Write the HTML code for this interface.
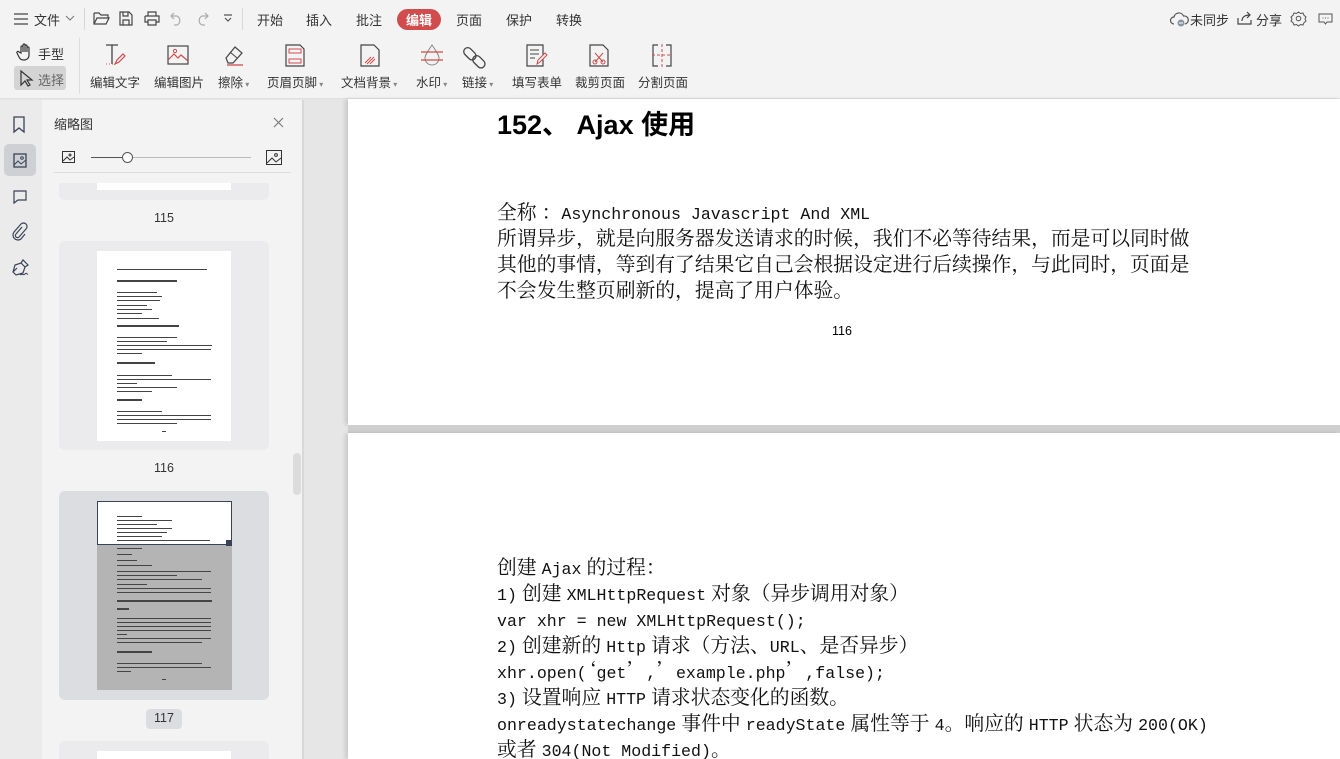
<!DOCTYPE html>
<html><head><meta charset="utf-8">
<style>
*{margin:0;padding:0;box-sizing:border-box}
html{width:1340px;height:759px;overflow:hidden}
body{width:1340px;height:759px;overflow:hidden;position:relative;background:#e6e6e6;font-family:"Liberation Sans","Noto Sans CJK SC",sans-serif;color:#333}
.abs{position:absolute}
#top{left:0;top:0;width:1340px;height:99px;background:#f3f3f3;border-bottom:1px solid #e0e0e0}
.t{position:absolute;font-size:13px;color:#333;white-space:nowrap}
.tab{position:absolute;top:10px;font-size:13px;color:#333}
.lbl{position:absolute;top:72px;font-size:12.5px;color:#333;white-space:nowrap}
svg{position:absolute;overflow:visible}
#strip{left:0;top:100px;width:42px;height:659px;background:#ebebeb}
#panel{left:42px;top:100px;width:249px;height:659px;background:#f3f3f3}
#sb{left:291px;top:100px;width:13px;height:659px;background:#f3f3f3;border-right:2px solid #d8d8da}
.page{position:absolute;left:348px;width:992px;background:#fff}
.ln{position:absolute;left:497px;height:26px;line-height:26px;font-family:"Noto Serif CJK SC","Liberation Serif",serif;font-size:19.8px;color:#111;white-space:nowrap}
.m{font-family:"Liberation Mono",monospace;font-style:normal;font-size:16.6px;line-height:1}
.card{position:absolute;left:59px;width:210px;border-radius:6px;overflow:hidden}
.tl{position:absolute;height:2px;background:#444}
.num{position:absolute;font-size:12.5px;color:#333;width:60px;text-align:center;left:134px}
</style></head><body>
<div id="top" class="abs">
 <svg style="left:13px;top:13px" width="16" height="12"><path d="M1 1h14M1 6h14M1 11h14" stroke="#444" stroke-width="1.3"/></svg>
 <div class="t" style="left:34px;top:10px">文件</div>
 <svg style="left:65px;top:15px" width="10" height="6"><path d="M1 1l4 4 4-4" stroke="#777" fill="none"/></svg>
 <div class="abs" style="left:84px;top:8px;width:1px;height:22px;background:#d8d8d8"></div>
 <svg style="left:93px;top:11px" width="17" height="14"><path d="M1 2h5l2 2h7v3M1 2v11h12l3-6H4l-3 6" stroke="#444" fill="none" stroke-width="1.2"/></svg>
 <svg style="left:119px;top:11px" width="14" height="15"><path d="M1 1h9l3 3v10H1zM4 1v4h5V1M4 14V9h6v5" stroke="#444" fill="none" stroke-width="1.2"/></svg>
 <svg style="left:144px;top:11px" width="16" height="15"><path d="M4 5V1h8v4M1 5h14v6h-3M4 11H1V5M4 9h8v5H4z" stroke="#444" fill="none" stroke-width="1.2"/></svg>
 <svg style="left:170px;top:12px" width="13" height="13"><path d="M4 1L1 4l3 3M1 4h6a5 5 0 010 9H4" stroke="#aaa" fill="none" stroke-width="1.2"/></svg>
 <svg style="left:196px;top:12px" width="13" height="13"><path d="M9 1l3 3-3 3M12 4H6a5 5 0 000 9h3" stroke="#aaa" fill="none" stroke-width="1.2"/></svg>
 <svg style="left:223px;top:14px" width="10" height="9"><path d="M1 1h8M2 4l3 3 3-3" stroke="#555" fill="none" stroke-width="1.2"/></svg>
 <div class="abs" style="left:242px;top:8px;width:1px;height:22px;background:#d8d8d8"></div>
 <div class="tab" style="left:257px">开始</div>
 <div class="tab" style="left:306px">插入</div>
 <div class="tab" style="left:356px">批注</div>
 <div class="abs" style="left:397px;top:9px;width:44px;height:21px;border-radius:11px;background:#d14c4c"></div>
 <div class="tab" style="left:406px;color:#fff;font-weight:bold">编辑</div>
 <div class="tab" style="left:456px">页面</div>
 <div class="tab" style="left:506px">保护</div>
 <div class="tab" style="left:556px">转换</div>
 <svg style="left:1170px;top:12px" width="18" height="15"><path d="M4 12a3.5 3.5 0 010-7 5 5 0 019.5-1A4 4 0 0115 12" stroke="#555" fill="none" stroke-width="1.2"/><circle cx="11" cy="11" r="3.5" fill="#8a93a6"/><path d="M9 11h4" stroke="#fff"/></svg>
 <div class="t" style="left:1190px;top:10px">未同步</div>
 <svg style="left:1237px;top:11px" width="15" height="15"><path d="M1 7v6h13V9M5 10c0-4 3-6 8-6M10 1l3 3-3 3" stroke="#444" fill="none" stroke-width="1.2"/></svg>
 <div class="t" style="left:1256px;top:10px">分享</div>
 <svg style="left:1291px;top:11px" width="15" height="15"><path d="M7.5 1l2 1.5 2.5-.5 1 2.3 2 1.7-1 2 1 2-2 1.7-1 2.3-2.5-.5-2 1.5-2-1.5-2.5.5-1-2.3-2-1.7 1-2-1-2 2-1.7 1-2.3 2.5.5z" stroke="#555" fill="none"/><circle cx="7.5" cy="7.5" r="2.3" stroke="#555" fill="none"/></svg>
 <svg style="left:1318px;top:13px" width="15" height="12"><path d="M1 1h13v8H9l-1.5 2L6 9H1z" stroke="#555" fill="none"/><path d="M4.5 5h1M7 5h1M9.5 5h1" stroke="#555"/></svg>
 <svg style="left:17px;top:43px" width="16" height="18"><path d="M4 10V4a1 1 0 012 0v5V2a1 1 0 012 0v7V3a1 1 0 012 0v6V5a1 1 0 012 0v7c0 3-2 5-5 5s-4-1-5-3l-2-4a1 1 0 012-1z" stroke="#333" fill="none" stroke-width="1.2"/></svg>
 <div class="t" style="left:38px;top:44px">手型</div>
 <div class="abs" style="left:14px;top:66px;width:52px;height:24px;border-radius:3px;background:#d4d4d4"></div>
 <svg style="left:20px;top:70px" width="13" height="17"><path d="M1 1v14l4-4 3 5 2-1-3-5h5z" stroke="#333" fill="none" stroke-width="1.2"/></svg>
 <div class="t" style="left:38px;top:70px;color:#666">选择</div>
 <div class="abs" style="left:79px;top:38px;width:1px;height:56px;background:#ddd"></div>
 <svg style="left:104px;top:44px" width="22" height="22"><path d="M2 1h12M8 1v19" stroke="#444" stroke-width="1.3"/><path d="M11 20l2-4 6-6 2 2-6 6z" stroke="#d14c4c" fill="none" stroke-width="1.2"/><path d="M2 20h7" stroke="#d14c4c" stroke-dasharray="1 2"/></svg>
 <div class="lbl" style="left:90px">编辑文字</div>
 <svg style="left:167px;top:45px" width="22" height="20"><rect x="1" y="1" width="20" height="18" stroke="#444" fill="none" stroke-width="1.2"/><path d="M1 15l6-6 4 4 3-3 7 6" stroke="#d14c4c" fill="none" stroke-width="1.2"/><circle cx="8" cy="6" r="1.6" stroke="#d14c4c" fill="none"/></svg>
 <div class="lbl" style="left:154px">编辑图片</div>
 <svg style="left:223px;top:44px" width="22" height="22"><path d="M3 14l9-11 7 6-9 10H5z" stroke="#444" fill="none" stroke-width="1.2"/><path d="M7 8l7 6" stroke="#444"/><path d="M4 21h16" stroke="#d14c4c" stroke-width="1.3"/></svg>
 <div class="lbl" style="left:218px">擦除<span style="font-size:8px;color:#888"> ▾</span></div>
 <svg style="left:285px;top:44px" width="20" height="23"><path d="M1 1h14l4 4v17H1z" stroke="#444" fill="none" stroke-width="1.2"/><rect x="4" y="5" width="12" height="4" stroke="#d14c4c" fill="none"/><rect x="4" y="15" width="12" height="4" stroke="#d14c4c" fill="none"/></svg>
 <div class="lbl" style="left:267px">页眉页脚<span style="font-size:8px;color:#888"> ▾</span></div>
 <svg style="left:360px;top:44px" width="20" height="23"><path d="M1 1h13l5 5v16H1z" stroke="#444" fill="none" stroke-width="1.2"/><path d="M5 19l6-6M7 20l7-7M10 20l5-5" stroke="#d14c4c"/></svg>
 <div class="lbl" style="left:341px">文档背景<span style="font-size:8px;color:#888"> ▾</span></div>
 <svg style="left:420px;top:43px" width="24" height="24"><path d="M12 2c-4 6-7 10-7 13a7 7 0 0014 0c0-3-3-7-7-13z" stroke="#888" fill="none"/><path d="M1 9h22M1 17h22" stroke="#d14c4c" stroke-width="1.2"/></svg>
 <div class="lbl" style="left:416px">水印<span style="font-size:8px;color:#888"> ▾</span></div>
 <svg style="left:467px;top:43px" width="24" height="24"><rect x="-3" y="3" width="14" height="8" rx="4" transform="translate(5 3) rotate(45)" stroke="#444" fill="none" stroke-width="1.3"/><rect x="-3" y="3" width="14" height="8" rx="4" transform="translate(14 11) rotate(45)" stroke="#444" fill="none" stroke-width="1.3"/></svg>
 <div class="lbl" style="left:462px">链接<span style="font-size:8px;color:#888"> ▾</span></div>
 <svg style="left:526px;top:44px" width="22" height="23"><path d="M1 1h16v21H1z" stroke="#444" fill="none" stroke-width="1.2"/><path d="M4 6h9M4 10h9M4 14h5" stroke="#444"/><path d="M11 20l1-4 7-7 2 2-7 7z" stroke="#d14c4c" fill="#f3f3f3"/></svg>
 <div class="lbl" style="left:512px">填写表单</div>
 <svg style="left:589px;top:44px" width="20" height="23"><path d="M1 1h13l5 5v16H1z" stroke="#444" fill="none" stroke-width="1.2"/><path d="M6 9l8 9M14 9l-8 9" stroke="#d14c4c"/><circle cx="6" cy="18" r="2" stroke="#d14c4c" fill="none"/><circle cx="14" cy="18" r="2" stroke="#d14c4c" fill="none"/></svg>
 <div class="lbl" style="left:575px">裁剪页面</div>
 <svg style="left:652px;top:44px" width="20" height="23"><path d="M6 1H1v21h5M14 1h5v21h-5" stroke="#444" fill="none" stroke-width="1.2"/><path d="M10 0v23M0 11h20" stroke="#d14c4c" stroke-dasharray="3 2"/></svg>
 <div class="lbl" style="left:638px">分割页面</div>
</div>

<div id="strip" class="abs">
 <svg style="left:13px;top:16px" width="12" height="17"><path d="M1 1h10v15l-5-4-5 4z" stroke="#3b4257" fill="none" stroke-width="1.3"/></svg>
 <div class="abs" style="left:4px;top:44px;width:32px;height:32px;border-radius:5px;background:#cfd0d3"></div>
 <svg style="left:13px;top:53px" width="14" height="15"><rect x="1" y="1" width="12" height="13" stroke="#3b4257" fill="none" stroke-width="1.3"/><path d="M1 12l4-4 3 3 5-4" stroke="#3b4257" fill="none"/><circle cx="9" cy="5" r="1.3" stroke="#3b4257" fill="none"/></svg>
 <svg style="left:13px;top:90px" width="14" height="13"><path d="M1 1h12v9H5l-4 3z" stroke="#3b4257" fill="none" stroke-width="1.2"/></svg>
 <svg style="left:12px;top:123px" width="15" height="18"><path d="M10 4l-6 7a2 2 0 003 3l7-8a3.5 3.5 0 00-5-5L2 9a5 5 0 007 7l4-5" stroke="#3b4257" fill="none" stroke-width="1.2"/></svg>
 <svg style="left:11px;top:159px" width="18" height="17"><path d="M2 13l2-7 6-2 4 4-2 6-7 2zM10 4l2-3 5 5-3 2M2 13l4-4" stroke="#3b4257" fill="none" stroke-width="1.2"/><path d="M9 16c2-2 3 1 5-1s2 1 3 0" stroke="#3b4257" fill="none"/></svg>
</div>

<div id="panel" class="abs">
 <div class="abs" style="left:12px;top:14px;font-size:13px;color:#333">缩略图</div>
 <svg style="left:231px;top:17px" width="11" height="11"><path d="M1 1l9 9M10 1l-9 9" stroke="#777" stroke-width="1.1"/></svg>
 <svg style="left:20px;top:51px" width="13" height="12"><rect x=".5" y=".5" width="12" height="11" stroke="#333" fill="none"/><path d="M1 10l4-4 3 3 4-3" stroke="#333" fill="none"/><circle cx="8" cy="4" r="1" stroke="#333" fill="none"/></svg>
 <div class="abs" style="left:49px;top:57px;width:160px;height:1px;background:#bbb"></div>
 <div class="abs" style="left:49px;top:57px;width:37px;height:1px;background:#555"></div>
 <div class="abs" style="left:80px;top:52px;width:11px;height:11px;border-radius:50%;border:1px solid #555;background:#fff"></div>
 <svg style="left:224px;top:50px" width="16" height="15"><rect x=".5" y=".5" width="15" height="14" stroke="#333" fill="none"/><path d="M1 13l5-5 4 4 5-4" stroke="#333" fill="none"/><circle cx="10" cy="5" r="1.4" stroke="#333" fill="none"/></svg>
 <div class="abs" style="left:12px;top:72px;width:237px;height:1px;background:#ddd"></div>
</div>
<div id="sb" class="abs"><div class="abs" style="left:2px;top:353px;width:8px;height:42px;border-radius:4px;background:#dcdcdc"></div></div>

<div class="card" style="top:183px;height:17px;background:#ebebed;border-radius:0 0 6px 6px"><div class="abs" style="left:38px;top:0;width:134px;height:7px;background:#fff"></div></div>
<div class="num" style="top:211px">115</div>
<div class="card" style="top:241px;height:209px;background:#ebebed">
 <div class="abs" style="left:38px;top:10px;width:134px;height:190px;background:#fff">
  <div class="tl" style="left:20px;top:18px;width:90px;height:1px"></div>
  <div class="tl" style="left:20px;top:29px;width:60px"></div>
  <div class="tl" style="left:20px;top:41px;width:40px;height:1px"></div><div class="tl" style="left:20px;top:45px;width:45px;height:1px"></div><div class="tl" style="left:20px;top:49px;width:43px;height:1px"></div><div class="tl" style="left:20px;top:54px;width:30px;height:1px"></div><div class="tl" style="left:20px;top:58px;width:35px;height:1px"></div><div class="tl" style="left:20px;top:62px;width:25px;height:1px"></div><div class="tl" style="left:20px;top:67px;width:42px;height:1px"></div>
  <div class="tl" style="left:20px;top:74px;width:62px"></div>
  <div class="tl" style="left:20px;top:86px;width:60px;height:1px"></div><div class="tl" style="left:20px;top:90px;width:50px;height:1px"></div><div class="tl" style="left:20px;top:94px;width:95px;height:1px"></div><div class="tl" style="left:20px;top:98px;width:94px;height:1px"></div><div class="tl" style="left:20px;top:102px;width:25px;height:1px"></div>
  <div class="tl" style="left:20px;top:111px;width:38px"></div>
  <div class="tl" style="left:20px;top:124px;width:55px;height:1px"></div><div class="tl" style="left:20px;top:128px;width:94px;height:1px"></div><div class="tl" style="left:20px;top:132px;width:20px;height:1px"></div><div class="tl" style="left:20px;top:136px;width:60px;height:1px"></div><div class="tl" style="left:20px;top:140px;width:35px;height:1px"></div>
  <div class="tl" style="left:20px;top:148px;width:25px"></div>
  <div class="tl" style="left:20px;top:160px;width:45px;height:1px"></div><div class="tl" style="left:20px;top:164px;width:94px;height:1px"></div><div class="tl" style="left:20px;top:168px;width:94px;height:1px"></div><div class="tl" style="left:20px;top:172px;width:60px;height:1px"></div>
  <div class="tl" style="left:65px;top:180px;width:4px;height:1px"></div>
 </div>
</div>
<div class="num" style="top:461px">116</div>
<div class="card" style="top:491px;height:209px;background:#dcdde0">
 <div class="abs" style="left:38px;top:10px;width:135px;height:189px;background:#b4b4b4">
  <div class="abs" style="left:0;top:0;width:135px;height:44px;background:#fff;border:1px solid #3b4257"></div>
  <div class="abs" style="left:129px;top:39px;width:6px;height:6px;background:#3b4257"></div>
  <div class="tl" style="left:20px;top:15px;width:25px;height:1px"></div><div class="tl" style="left:20px;top:19px;width:55px;height:1px"></div><div class="tl" style="left:20px;top:23px;width:40px;height:1px"></div><div class="tl" style="left:20px;top:27px;width:55px;height:1px"></div><div class="tl" style="left:20px;top:31px;width:50px;height:1px"></div><div class="tl" style="left:20px;top:35px;width:45px;height:1px"></div><div class="tl" style="left:20px;top:39px;width:93px;height:1px"></div>
  <div class="tl" style="left:20px;top:47px;width:25px;height:1px"></div><div class="tl" style="left:20px;top:53px;width:15px;height:1px"></div><div class="tl" style="left:20px;top:59px;width:20px;height:1px"></div><div class="tl" style="left:20px;top:64px;width:35px;height:1px"></div><div class="tl" style="left:20px;top:70px;width:94px;height:1px"></div><div class="tl" style="left:20px;top:74px;width:60px;height:1px"></div><div class="tl" style="left:20px;top:78px;width:85px;height:1px"></div><div class="tl" style="left:20px;top:83px;width:30px;height:1px"></div><div class="tl" style="left:20px;top:87px;width:94px;height:1px"></div><div class="tl" style="left:20px;top:91px;width:94px;height:1px"></div>
  <div class="tl" style="left:20px;top:99px;width:95px"></div><div class="tl" style="left:20px;top:107px;width:12px"></div>
  <div class="tl" style="left:20px;top:117px;width:94px;height:1px"></div><div class="tl" style="left:20px;top:121px;width:94px;height:1px"></div><div class="tl" style="left:20px;top:125px;width:94px;height:1px"></div><div class="tl" style="left:20px;top:129px;width:94px;height:1px"></div><div class="tl" style="left:20px;top:133px;width:10px;height:1px"></div><div class="tl" style="left:20px;top:137px;width:94px;height:1px"></div><div class="tl" style="left:20px;top:141px;width:85px;height:1px"></div>
  <div class="tl" style="left:20px;top:150px;width:35px"></div>
  <div class="tl" style="left:20px;top:162px;width:85px;height:1px"></div><div class="tl" style="left:20px;top:166px;width:94px;height:1px"></div><div class="tl" style="left:20px;top:170px;width:14px;height:1px"></div>
  <div class="tl" style="left:65px;top:178px;width:4px;height:1px"></div>
 </div>
</div>
<div class="abs" style="left:146px;top:709px;width:36px;height:20px;border-radius:4px;background:#dcdde0"></div>
<div class="num" style="top:711px">117</div>
<div class="card" style="top:741px;height:18px;background:#ebebed;border-radius:6px 6px 0 0"><div class="abs" style="left:38px;top:10px;width:134px;height:8px;background:#fff"></div></div>

<div class="page" style="top:99px;height:326px;box-shadow:-3px 0 4px rgba(0,0,0,.12)"></div>
<div class="abs" style="left:348px;top:425px;width:992px;height:8px;background:#cfcfcf"></div>
<div class="page" style="top:433px;height:326px;box-shadow:-3px 0 4px rgba(0,0,0,.12)"></div>

<div class="abs" style="left:497px;top:108px;font-size:27px;font-weight:bold;color:#000;white-space:nowrap;line-height:34px">152、 Ajax 使用</div>
<div class="ln" style="top:198px">全称 ：<i class="m">Asynchronous Javascript And XML</i></div>
<div class="ln" style="top:224px">所谓异步，就是向服务器发送请求的时候，我们不必等待结果，而是可以同时做</div>
<div class="ln" style="top:250px">其他的事情，等到有了结果它自己会根据设定进行后续操作，与此同时，页面是</div>
<div class="ln" style="top:276px">不会发生整页刷新的，提高了用户体验。</div>
<div class="abs" style="left:832px;top:324px;font-size:12.5px;color:#000">116</div>
<div class="ln" style="top:553px">创建 <i class="m">Ajax</i> 的过程：</div>
<div class="ln" style="top:579px"><i class="m">1)</i> 创建 <i class="m">XMLHttpRequest</i> 对象（异步调用对象）</div>
<div class="ln" style="top:605px"><i class="m">var xhr = new XMLHttpRequest();</i></div>
<div class="ln" style="top:631px"><i class="m">2)</i> 创建新的 <i class="m">Http</i> 请求（方法、<i class="m">URL</i>、是否异步）</div>
<div class="ln" style="top:657px"><i class="m">xhr.open(</i>‘<i class="m">get</i>’<i class="m">,</i>’<i class="m">example.php</i>’<i class="m">,false);</i></div>
<div class="ln" style="top:683px"><i class="m">3)</i> 设置响应 <i class="m">HTTP</i> 请求状态变化的函数。</div>
<div class="ln" style="top:709px"><i class="m">onreadystatechange</i> 事件中 <i class="m">readyState</i> 属性等于 <i class="m">4</i>。响应的 <i class="m">HTTP</i> 状态为 <i class="m">200(OK)</i></div>
<div class="ln" style="top:735px">或者 <i class="m">304(Not Modified)</i>。</div>
</body></html>
